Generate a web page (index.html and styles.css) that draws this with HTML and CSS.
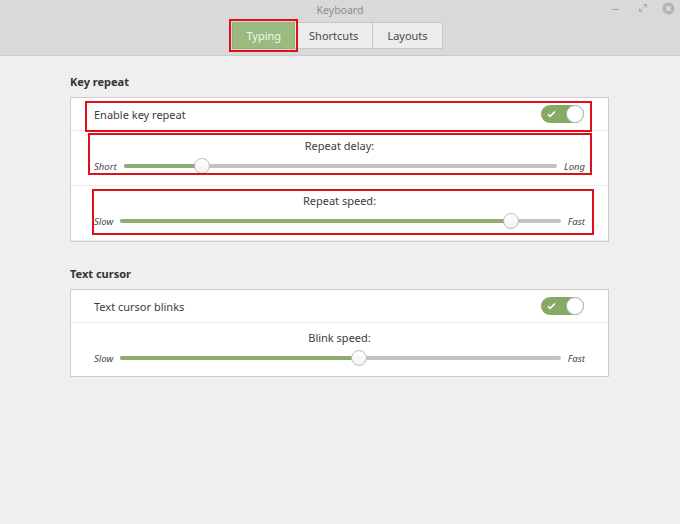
FILE: index.html
```html
<!DOCTYPE html>
<html>
<head>
<meta charset="utf-8">
<link rel="stylesheet" href="styles.css">
</head>
<body>
<div class="window">
  <header class="header">
    <div class="titlebar">
      <div class="title">Keyboard</div>
      <div class="controls">
        <span class="ctl-min"></span>
        <svg class="ctl-max" width="10" height="10" viewBox="0 0 10 10"><path d="M5.5 1.5h3v3M8.5 1.5l-3 3M4.5 8.5h-3v-3M1.5 8.5l3-3" fill="none" stroke="#a9a9a9" stroke-width="1"/></svg>
        <svg class="ctl-close" width="13" height="13" viewBox="0 0 13 13"><circle cx="6.5" cy="6.5" r="6" fill="#b3b3b3"/><path d="M4.3 4.3l4.4 4.4M8.7 4.3l-4.4 4.4" stroke="#e4e4e4" stroke-width="1.6"/></svg>
      </div>
    </div>
    <nav class="tabs">
      <div class="tab tab-active">Typing</div>
      <div class="tab">Shortcuts</div>
      <div class="tab">Layouts</div>
    </nav>
  </header>

  <main class="content">
    <section class="section">
      <h2 class="section-title">Key repeat</h2>
      <div class="box">
        <div class="row row-switch">
          <span class="row-label">Enable key repeat</span>
          <span class="switch"><svg class="check" width="9" height="8" viewBox="0 0 9 8"><path d="M1 4.2l2.2 2.2L8 1.5" fill="none" stroke="#fff" stroke-width="1.6"/></svg><span class="knob"></span></span>
        </div>
        <div class="row row-slider">
          <div class="slider-title">Repeat delay:</div>
          <div class="slider-line">
            <span class="end">Short</span>
            <div class="track track-delay"><div class="fill" style="width:18.2%"></div><div class="thumb" style="left:18.2%"></div></div>
            <span class="end">Long</span>
          </div>
        </div>
        <div class="row row-slider">
          <div class="slider-title">Repeat speed:</div>
          <div class="slider-line">
            <span class="end">Slow</span>
            <div class="track"><div class="fill" style="width:88.6%"></div><div class="thumb" style="left:88.6%"></div></div>
            <span class="end">Fast</span>
          </div>
        </div>
        <div class="mark mark-1"></div>
        <div class="mark mark-2"></div>
        <div class="mark mark-3"></div>
      </div>
    </section>

    <section class="section section-2">
      <h2 class="section-title">Text cursor</h2>
      <div class="box">
        <div class="row row-switch">
          <span class="row-label">Text cursor blinks</span>
          <span class="switch"><svg class="check" width="9" height="8" viewBox="0 0 9 8"><path d="M1 4.2l2.2 2.2L8 1.5" fill="none" stroke="#fff" stroke-width="1.6"/></svg><span class="knob"></span></span>
        </div>
        <div class="row row-slider row-last">
          <div class="slider-title">Blink speed:</div>
          <div class="slider-line">
            <span class="end">Slow</span>
            <div class="track"><div class="fill" style="width:54.2%"></div><div class="thumb" style="left:54.2%"></div></div>
            <span class="end">Fast</span>
          </div>
        </div>
      </div>
    </section>
  </main>
</div>
</body>
</html>
```

FILE: styles.css
```css
* { box-sizing: border-box; }
html, body { margin: 0; padding: 0; }
body {
  width: 680px;
  height: 524px;
  background: #efefef;
  font-family: "Noto Sans", "DejaVu Sans", sans-serif;
  color: #3c3c3c;
  overflow: hidden;
}
.window { width: 680px; height: 524px; }

.header {
  height: 56px;
  background: #d9d9d9;
  border-bottom: 1px solid #cbcbcb;
}
.titlebar {
  height: 18px;
  position: relative;
  display: flex;
  justify-content: center;
  align-items: center;
}
.title {
  font-size: 10.5px;
  color: #8e8e8e;
  line-height: 14px;
  margin-top: 1px;
}
.controls {
  position: absolute;
  right: 5px;
  top: 1px;
  display: flex;
  align-items: center;
  height: 14px;
}
.ctl-min {
  width: 7px;
  height: 1px;
  background: #a9a9a9;
  margin-right: 19px;
  margin-top: 2px;
}
.ctl-max { margin-right: 14px; }

.tabs {
  display: flex;
  justify-content: center;
  margin-top: 4px;
  padding-right: 4px;
}
.tab {
  height: 27px;
  line-height: 25px;
  font-size: 11px;
  color: #4a4a4a;
  background: #ececec;
  border: 1px solid #c6c6c6;
  margin-left: -1px;
  padding: 0 14px;
}
.tab-active {
  background: #9bba7f;
  border-color: #92b077;
  color: #f3f7ee;
  padding: 0 13px;
  outline: 2px solid #e0101a;
  outline-offset: 1px;
  position: relative;
  z-index: 1;
}

.content {
  padding: 18px 71px 0 70px;
}
.section-title {
  margin: 0;
  font-size: 11px;
  font-weight: bold;
  color: #333;
  line-height: 15px;
}
.section-2 { margin-top: 24px; }

.box {
  position: relative;
  margin-top: 8px;
  background: #fff;
  border: 1px solid #cdcdcd;
}
.row {
  border-bottom: 1px solid #ececec;
}
.row-last { border-bottom: none; }
.row-switch {
  height: 33px;
  display: flex;
  align-items: center;
  justify-content: space-between;
  padding: 0 24px 0 23px;
}
.row-label {
  font-size: 11px;
  color: #3c3c3c;
}
.switch {
  position: relative;
  width: 43px;
  height: 18px;
  border-radius: 9px;
  background: #86aa65;
  display: flex;
  align-items: center;
}
.check { margin-left: 6px; }
.knob {
  position: absolute;
  right: 0;
  top: 0;
  width: 18px;
  height: 18px;
  border-radius: 50%;
  background: #fff;
  border: 1px solid #b9b9b9;
}

.row-slider {
  height: 55px;
  padding: 7px 23px 0 23px;
}
.row-last { height: 53px; }
.slider-title {
  text-align: center;
  font-size: 11px;
  line-height: 15px;
  color: #3c3c3c;
}
.slider-line {
  display: flex;
  align-items: center;
  gap: 7px;
  margin-top: 4px;
  height: 18px;
}
.end {
  font-size: 9.5px;
  font-style: italic;
  color: #444;
}
.track {
  flex: 1;
  position: relative;
  height: 4px;
  border-radius: 2px;
  background: #c3c3c3;
}
.fill {
  height: 4px;
  border-radius: 2px;
  background: #8eac70;
}
.thumb {
  position: absolute;
  top: -6px;
  width: 16px;
  height: 16px;
  margin-left: -8px;
  border-radius: 50%;
  background: linear-gradient(#ffffff, #f1f1f1);
  border: 1px solid #bdbdbd;
}

.mark {
  position: absolute;
  border: 2px solid #e0101a;
  pointer-events: none;
}
.mark-1 { left: 14px; top: 3px; width: 507px; height: 31px; }
.mark-2 { left: 17px; top: 35px; width: 504px; height: 42px; }
.mark-3 { left: 21px; top: 91px; width: 502px; height: 46px; }
```
